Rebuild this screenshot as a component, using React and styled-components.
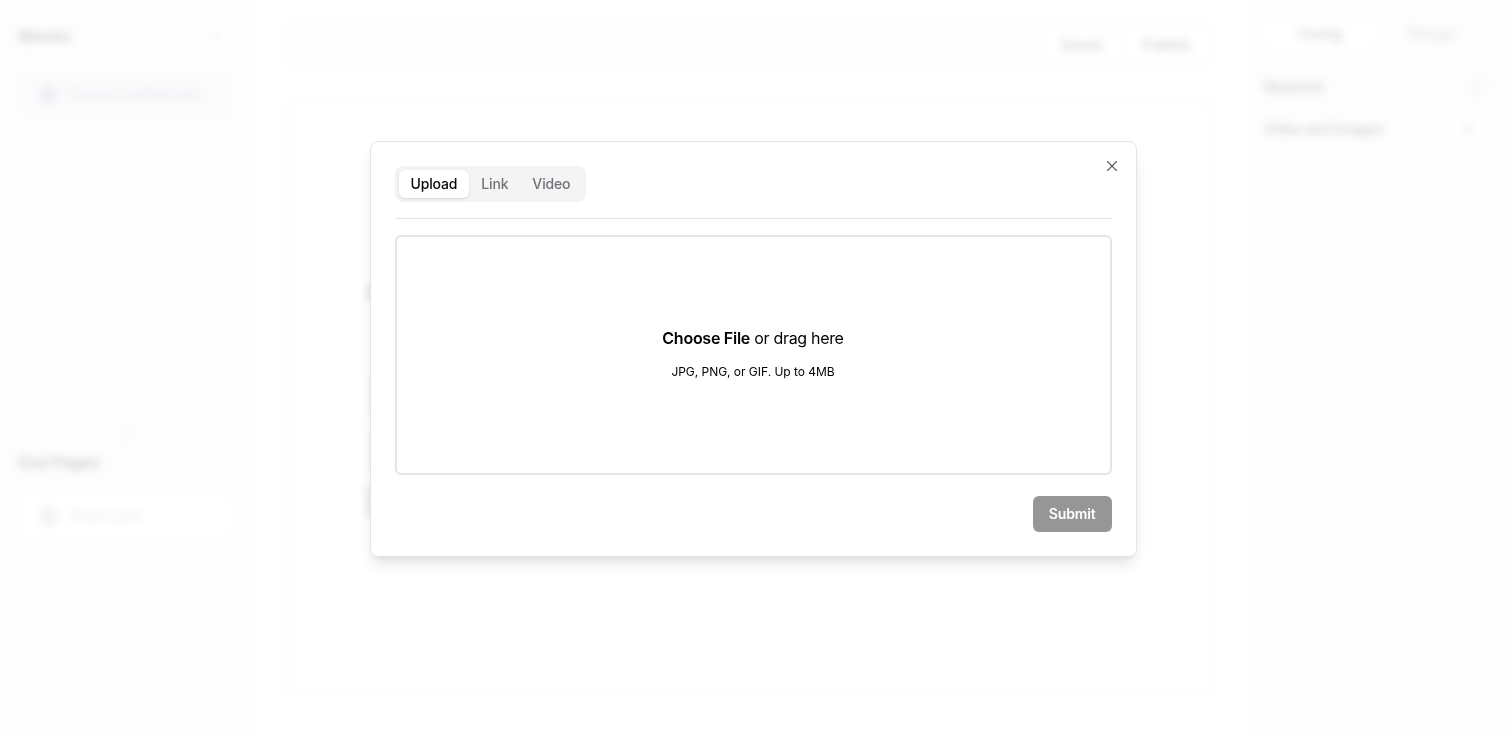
import styled, { createGlobalStyle } from "styled-components";
import { CircleUser, GripVertical, Plus, X } from "lucide-react";

const GlobalStyle = createGlobalStyle`
  * {
    box-sizing: border-box;
  }
  body {
    margin: 0;
    background: #fff;
    color: #09090b;
    font-family: Inter, "Liberation Sans", sans-serif;
    font-size: 14px;
    line-height: 20px;
    overflow: hidden;
  }
  button {
    font: inherit;
    color: inherit;
    border: 0;
    padding: 0;
    background: none;
  }
`;

const Page = styled.div`
  display: grid;
  grid-template-columns: 250px 1fr 257px;
  width: 1506px;
  height: 736px;
`;

const Sidebar = styled.aside`
  display: flex;
  flex-direction: column;
  padding: 20px 19px;
  background: #f4f4f5;
`;

const SidebarHeader = styled.div`
  display: flex;
  align-items: center;
  justify-content: space-between;
  height: 32px;
`;

const Title = styled.h2`
  margin: 0;
  font-size: 16px;
  line-height: 24px;
  font-weight: 600;
`;

const IconButton = styled.button`
  display: flex;
  align-items: center;
  justify-content: center;
  width: ${(props) => props.$width || 32}px;
  height: 32px;
  border-radius: 6px;
  background: #fafafa;
`;

const BlockItem = styled.div`
  display: flex;
  align-items: center;
  gap: 9px;
  height: 42px;
  padding-left: 20px;
  margin-top: ${(props) => props.$top}px;
  border-radius: 6px;
  color: ${(props) => (props.$active ? "#8886b4" : "#85858c")};
  background: ${(props) => (props.$active ? "#ebebf0" : "#fff")};
  white-space: nowrap;

  svg {
    flex: none;
    color: ${(props) => (props.$active ? "#5b4a86" : "#71717a")};
  }
`;

const BlockList = styled.div`
  height: 372px;
`;

const Handle = styled.div`
  display: flex;
  align-items: flex-end;
  justify-content: center;
  height: 48px;
  padding-left: 2px;
  color: #a1a1aa;
`;

const EndPages = styled.div`
  padding-top: 10px;
`;

const Main = styled.main`
  display: flex;
  flex-direction: column;
  gap: 32px;
  padding: 21px 37px 42px 36px;
`;

const Toolbar = styled.div`
  display: flex;
  align-items: center;
  justify-content: flex-end;
  flex: none;
  gap: 6px;
  height: 48px;
  padding: 0 4px;
  background: #f4f4f5;
`;

const ToolbarButton = styled.button`
  height: 32px;
  padding: 0 17px;
  border-radius: 6px;
  background: #fff;
  color: #09090b;
  font-weight: 500;
`;

const Canvas = styled.section`
  flex: 1;
  padding: 176px 0 0 78px;
  border: 2px solid #dedee2;
`;

const Question = styled.h1`
  margin: 0 0 64px;
  font-size: 20px;
  line-height: 28px;
`;

const Answer = styled.div`
  width: 320px;
  height: 48px;
  margin-bottom: 8px;
  border-radius: 6px;
  background: #e6ebeb;
`;

const NextButton = styled.button`
  width: 80px;
  height: 36px;
  border-radius: 6px;
  background: #8fa8d0;
`;

const Settings = styled(Sidebar)`
  padding: 18px 18px 18px 15px;
`;

const SettingsTabs = styled.div`
  display: grid;
  grid-template-columns: 1fr 1fr;
  height: 32px;
  margin-bottom: 16px;
`;

const SettingsTab = styled.button`
  border-radius: 6px;
  font-weight: 500;
  color: ${(props) => (props.$active ? "#09090b" : "#71717a")};
  background: ${(props) => (props.$active ? "#fff" : "transparent")};
`;

const SettingsRow = styled.div`
  display: flex;
  align-items: center;
  justify-content: space-between;
  height: 42px;
  font-weight: 500;
  letter-spacing: -0.1px;
  color: #09090b;
`;

const Toggle = styled.div`
  width: 20px;
  height: 18px;
  border-radius: 9px;
  background: #e4e4e7;
`;

const Overlay = styled.div`
  position: fixed;
  inset: 0;
  display: flex;
  align-items: flex-start;
  justify-content: center;
  padding: 141px 4px 0 0;
  background: rgba(255, 255, 255, 0.8);
  backdrop-filter: blur(4px);
`;

const Dialog = styled.div`
  position: relative;
  width: 767px;
  height: 416px;
  padding: 24px;
  border: 1px solid #e4e4e7;
  border-radius: 8px;
  background: #fff;
  box-shadow:
    0 10px 15px -3px rgba(0, 0, 0, 0.1),
    0 4px 6px -4px rgba(0, 0, 0, 0.1);
`;

const CloseButton = styled.button`
  position: absolute;
  top: 15px;
  right: 15px;
  display: flex;
  color: #5c5c5e;
`;

const Tabs = styled.div`
  display: inline-flex;
  height: 36px;
  padding: 4px;
  border-radius: 8px;
  background: #f4f4f5;
`;

const Tab = styled.button`
  height: 28px;
  padding: 0 12px;
  border-radius: 6px;
  font-weight: 500;
  letter-spacing: -0.16px;
  color: ${(props) => (props.$active ? "#09090b" : "#71717a")};
  background: ${(props) => (props.$active ? "#fff" : "transparent")};
  box-shadow: ${(props) =>
    props.$active
      ? "0 1px 3px rgba(0, 0, 0, 0.1), 0 1px 2px -1px rgba(0, 0, 0, 0.1)"
      : "none"};
`;

const Separator = styled.div`
  height: 1px;
  margin: 16px 0;
  background: #e4e4e7;
`;

const Dropzone = styled.div`
  display: flex;
  flex-direction: column;
  align-items: center;
  justify-content: center;
  gap: 14px;
  height: 240px;
  padding-bottom: 5px;
  border: 2px solid #e4e4e7;
  border-radius: 6px;
  color: #000;
`;

const DropText = styled.div`
  font-size: 16px;
  line-height: 24px;
  letter-spacing: -0.31px;

  strong {
    font-weight: 600;
    letter-spacing: -0.26px;
  }
`;

const DropHint = styled.div`
  font-size: 12px;
  line-height: 16px;
  letter-spacing: -0.03px;
`;

const Footer = styled.div`
  display: flex;
  justify-content: flex-end;
  margin-top: 21px;
`;

const SubmitButton = styled.button`
  height: 36px;
  padding: 0 16px;
  border-radius: 6px;
  background: #969696;
  color: #fff;
  font-weight: 600;
  letter-spacing: -0.16px;
`;

const UploadDialog = () => (
  <Overlay>
    <Dialog role="dialog">
      <Tabs>
        {["Upload", "Link", "Video"].map((name) => (
          <Tab key={name} $active={name === "Upload"}>
            {name}
          </Tab>
        ))}
      </Tabs>
      <Separator />
      <Dropzone>
        <DropText>
          <strong>Choose File</strong> or drag here
        </DropText>
        <DropHint>JPG, PNG, or GIF. Up to 4MB</DropHint>
      </Dropzone>
      <Footer>
        <SubmitButton disabled>Submit</SubmitButton>
      </Footer>
      <CloseButton aria-label="Close">
        <X size={18} strokeWidth={1.5} />
      </CloseButton>
    </Dialog>
  </Overlay>
);

const App = () => {
  return (
    <>
      <GlobalStyle />
      <Page>
        <Sidebar>
          <BlockList>
            <SidebarHeader>
              <Title>Blocks</Title>
              <IconButton>
                <Plus size={12} color="#52525b" />
              </IconButton>
            </SidebarHeader>
            <BlockItem $active $top={21}>
              <CircleUser size={18} />
              <span>Choose multiple opt...</span>
            </BlockItem>
          </BlockList>
          <Handle>
            <GripVertical size={14} />
          </Handle>
          <EndPages>
            <Title>End Pages</Title>
            <BlockItem $top={21}>
              <CircleUser size={20} />
              <span>Thank you!</span>
            </BlockItem>
          </EndPages>
        </Sidebar>
        <Main>
          <Toolbar>
            <ToolbarButton>Saved</ToolbarButton>
            <ToolbarButton>Publish</ToolbarButton>
          </Toolbar>
          <Canvas>
            <Question>Choose multiple options</Question>
            <Answer />
            <Answer />
            <NextButton />
          </Canvas>
        </Main>
        <Settings>
          <SettingsTabs>
            <SettingsTab $active>Config</SettingsTab>
            <SettingsTab>Design</SettingsTab>
          </SettingsTabs>
          <SettingsRow>
            Required
            <Toggle />
          </SettingsRow>
          <SettingsRow>
            Video and Images
            <IconButton $width={40}>
              <Plus size={14} />
            </IconButton>
          </SettingsRow>
        </Settings>
      </Page>
      <UploadDialog />
    </>
  );
};

export default App;
